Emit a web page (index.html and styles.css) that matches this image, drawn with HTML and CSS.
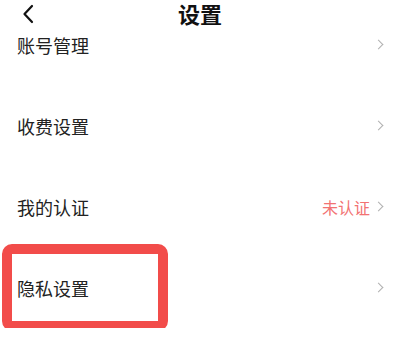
FILE: index.html
```html
<!DOCTYPE html>
<html lang="zh-CN">
<head>
    <meta charset="UTF-8">
    <meta name="viewport" content="width=device-width, initial-scale=1.0">
    <title>设置</title>
    <link rel="stylesheet" href="styles.css">
</head>
<body>
    <div class="header">
        <span class="back">
            <svg width="12" height="20" viewBox="0 0 12 20"><path d="M10 2 L2.5 10 L10 18" fill="none" stroke="#111" stroke-width="2.2" stroke-linecap="round" stroke-linejoin="round"/></svg>
        </span>
        <div class="title">设置</div>
    </div>

    <div class="list">
        <div class="row">
            <span class="label">账号管理</span>
            <span class="arrow"></span>
        </div>
        <div class="row">
            <span class="label">收费设置</span>
            <span class="arrow"></span>
        </div>
        <div class="row">
            <span class="label">我的认证</span>
            <span class="status">未认证</span>
            <span class="arrow"></span>
        </div>
        <div class="row row-marked">
            <span class="label">隐私设置</span>
            <span class="arrow"></span>
        </div>
    </div>
</body>
</html>
```

FILE: styles.css
```css
body {
    font-family: "Noto Sans CJK SC", "Noto Sans", sans-serif;
    margin: 0;
    padding: 0;
    background-color: #fff;
    color: #222;
    overflow: hidden;
}
.header {
    height: 28px;
    display: flex;
    justify-content: center;
    position: relative;
    z-index: 1;
}
.back {
    position: absolute;
    left: 22px;
    top: 4px;
    display: flex;
}
.title {
    font-size: 22px;
    font-weight: bold;
    color: #111;
    line-height: 26px;
}
.list {
    margin-top: -24px;
}
.row {
    height: 81px;
    display: flex;
    align-items: center;
    padding: 0 16px 0 17px;
    position: relative;
}
.label {
    font-size: 18px;
    flex-grow: 1;
}
.status {
    font-size: 16px;
    color: #f27272;
    margin-right: 5px;
}
.arrow {
    width: 6px;
    height: 6px;
    border-top: 1.5px solid #b0b0b0;
    border-right: 1.5px solid #b0b0b0;
    transform: rotate(45deg);
    margin-right: 2px;
}
.row-marked::after {
    content: "";
    position: absolute;
    left: 2px;
    top: -3px;
    width: 146px;
    height: 67px;
    border: 10px solid #f24c4a;
    border-radius: 10px;
}
```
